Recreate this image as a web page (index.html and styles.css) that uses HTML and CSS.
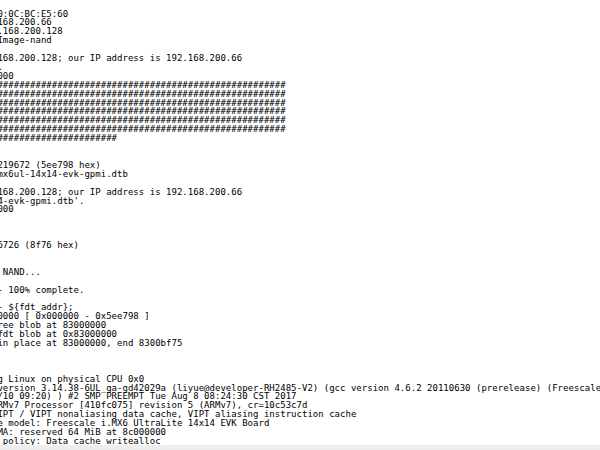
FILE: index.html
```html
<!DOCTYPE html>
<html lang="en">
<head>
<meta charset="utf-8">
<title>U-Boot console</title>
<link rel="stylesheet" href="styles.css">
</head>
<body>
<div class="screen">
<div class="term">
<pre class="log">=&gt;setenv ethaddr 00:00:0C:BC:E5:60
=&gt; setenv ipaddr 192.168.200.66
=&gt;setenv serverip 192.168.200.128
=&gt; tftpboot 80800000 Image-nand
Using FEC1 device
TFTP from server 192.168.200.128; our IP address is 192.168.200.66
Filename 'Image-nand'.
Load address: 0x80800000
Loading: #################################################################
         #################################################################
         #################################################################
         #################################################################
         #################################################################
         #################################################################
         ##################################
         1.2 MiB/s
done
Bytes transferred = 6219672 (5ee798 hex)
=&gt; tftp ${fdt_addr} imx6ul-14x14-evk-gpmi.dtb
Using FEC1 device
TFTP from server 192.168.200.128; our IP address is 192.168.200.66
Filename 'imx6ul-14x14-evk-gpmi.dtb'.
Load address: 0x83000000
Loading: ###
         4.1 MiB/s
done
Bytes transferred = 36726 (8f76 hex)
=&gt; 
=&gt; saveenv
Saving Environment to NAND...
Erasing NAND...
Erasing at 0x3c0000 -- 100% complete.
Writing to NAND... OK
=&gt; bootz ${loadaddr} - ${fdt_addr};
Kernel image @ 0x80800000 [ 0x000000 - 0x5ee798 ]
## Flattened Device Tree blob at 83000000
   Booting using the fdt blob at 0x83000000
   Using Device Tree in place at 83000000, end 8300bf75

Starting kernel ...

[    0.000000] Booting Linux on physical CPU 0x0
[    0.000000] Linux version 3.14.38-6UL_ga-gd42029a (liyue@developer-RH2485-V2) (gcc version 4.6.2 20110630 (prerelease) (Freescale MAD -- Linaro 2011.0
7 -- Built at 2011/08/10 09:20) ) #2 SMP PREEMPT Tue Aug 8 08:24:30 CST 2017
[    0.000000] CPU: ARMv7 Processor [410fc075] revision 5 (ARMv7), cr=10c53c7d
[    0.000000] CPU: PIPT / VIPT nonaliasing data cache, VIPT aliasing instruction cache
[    0.000000] Machine model: Freescale i.MX6 UltraLite 14x14 EVK Board
[    0.000000] cma: CMA: reserved 64 MiB at 8c000000
[    0.000000] Memory policy: Data cache writealloc</pre>
</div>
<div class="hbar"></div>
</div>
</body>
</html>
```
FILE: styles.css
```css
html, body {
  margin: 0;
  padding: 0;
  background: #ffffff;
}

.screen {
  width: 600px;
  height: 450px;
  display: flex;
  flex-direction: column;
  overflow: hidden;
}

.term {
  flex: 1;
  overflow: hidden;
  padding-top: 9.5px;
}

.log {
  margin: 0 0 0 -116.8px;
  font-family: "DejaVu Sans Mono", monospace;
  font-size: 9px;
  line-height: 8.9px;
  letter-spacing: 0.02px;
  color: #000000;
  white-space: pre;
}

.hbar {
  height: 5px;
  flex: none;
  background: #eeeeee;
}
```
